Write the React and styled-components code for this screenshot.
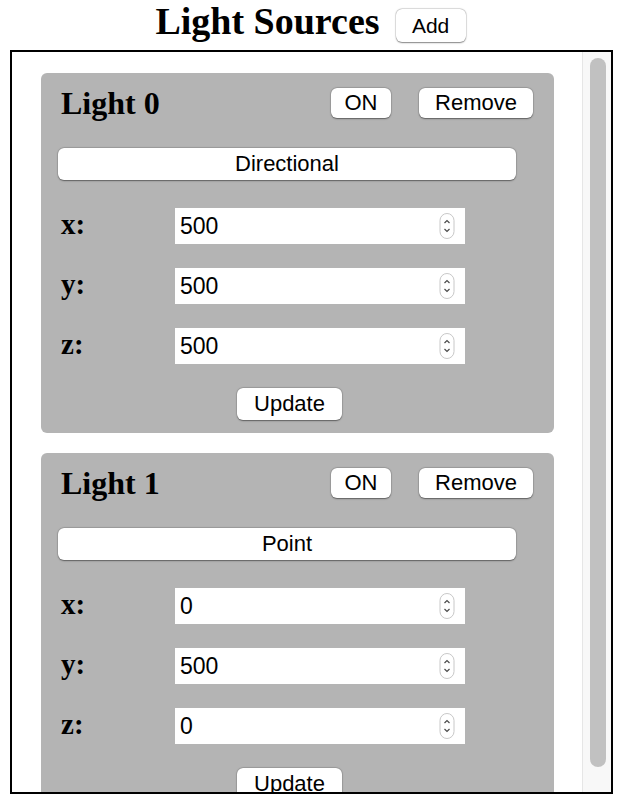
import React from "react";
import styled, { createGlobalStyle } from "styled-components";

const Global = createGlobalStyle`
  html, body { margin: 0; padding: 0; background: #ffffff; }
  body { font-family: "Liberation Serif", "Times New Roman", serif; color: #000; }
  input::-webkit-outer-spin-button, input::-webkit-inner-spin-button { -webkit-appearance: none; margin: 0; }
  input[type=number] { -moz-appearance: textfield; }
`;

const Header = styled.header`
  height: 50px;
  display: flex;
  justify-content: center;
  align-items: flex-start;
  gap: 16px;
  padding-right: 7px;
  box-sizing: border-box;
`;

const Title = styled.h1`
  margin: 2px 0 0;
  font-family: "Liberation Serif", "Times New Roman", serif;
  font-weight: 700;
  font-size: 38px;
  line-height: 38px;
`;

const Button = styled.button`
  appearance: none;
  box-sizing: border-box;
  background: #ffffff;
  border: 0;
  border-radius: 6px;
  box-shadow: 0 0.5px 1.5px rgba(0, 0, 0, 0.45), 0 0 0 0.5px rgba(0, 0, 0, 0.12);
  font-family: "Liberation Sans", Arial, sans-serif;
  font-size: ${(p) => p.$fs || 22}px;
  color: #000;
  padding: 0;
  width: ${(p) => p.$w}px;
  height: ${(p) => p.$h || 30}px;
  margin: ${(p) => p.$m || "0"};
  display: flex;
  align-items: center;
  justify-content: center;
  flex-shrink: 0;
`;

const Frame = styled.div`
  margin-left: 10px;
  width: 603px;
  height: 744px;
  box-sizing: border-box;
  border: 2px solid #000;
  display: flex;
`;

const Viewport = styled.div`
  width: 570px;
  height: 740px;
  overflow: hidden;
  box-sizing: border-box;
  padding: 21px 28px 0 29px;
  display: flex;
  flex-direction: column;
  gap: 20px;
`;

const ScrollTrack = styled.div`
  width: 29px;
  box-sizing: border-box;
  background: #f8f8f8;
  border-left: 1px solid #e6e6e6;
  padding: 6px 5px 0 7px;
`;

const ScrollThumb = styled.div`
  height: 709px;
  border-radius: 8px;
  background: #c1c1c1;
`;

const Card = styled.section`
  flex-shrink: 0;
  height: 360px;
  background: #b4b4b4;
  border-radius: 6px;
  box-sizing: border-box;
  padding: 15px 21px 0 20px;
  display: flex;
  flex-direction: column;
`;

const CardHead = styled.div`
  display: flex;
  align-items: flex-start;
  height: 30px;
`;

const CardTitle = styled.h2`
  flex: 1;
  margin: 0;
  font-family: "Liberation Serif", "Times New Roman", serif;
  font-weight: 700;
  font-size: 32px;
  line-height: 30px;
  white-space: nowrap;
`;

const Row = styled.div`
  display: flex;
  align-items: flex-start;
  height: 36px;
  margin-top: ${(p) => p.$mt}px;
`;

const Label = styled.label`
  width: 114px;
  font-family: "Liberation Serif", "Times New Roman", serif;
  font-weight: 700;
  font-size: 29px;
  line-height: 36px;
  margin-top: -2px;
`;

const InputBox = styled.div`
  width: 290px;
  height: 36px;
  background: #ffffff;
  display: flex;
  align-items: center;
  box-sizing: border-box;
  padding: 0 10px 0 5px;
`;

const NumInput = styled.input`
  flex: 1;
  min-width: 0;
  border: 0;
  outline: none;
  background: transparent;
  padding: 0;
  font-family: "Liberation Sans", Arial, sans-serif;
  font-size: 23px;
  color: #000;
`;

const Spinner = () => (
  <svg width="16" height="26" viewBox="0 0 16 26">
    <rect x="1" y="0.5" width="14" height="25" rx="7" fill="#fff" stroke="#c8c8c8" />
    <path d="M5.5 10 L8 7.5 L10.5 10" fill="none" stroke="#4a4a4a" strokeWidth="1.2" />
    <path d="M5.5 16 L8 18.5 L10.5 16" fill="none" stroke="#4a4a4a" strokeWidth="1.2" />
  </svg>
);

const Light = ({ index, kind, x, y, z }) => (
  <Card>
    <CardHead>
      <CardTitle>Light {index}</CardTitle>
      <Button $w={60} $m="0 28px 0 0">ON</Button>
      <Button $w={114}>Remove</Button>
    </CardHead>
    <Button $w={458} $h={32} $m="30px 0 0 -3px">{kind}</Button>
    {[["x", x], ["y", y], ["z", z]].map(([k, v], i) => (
      <Row key={k} $mt={i === 0 ? 28 : 24}>
        <Label>{k}:</Label>
        <InputBox>
          <NumInput type="number" defaultValue={v} />
          <Spinner />
        </InputBox>
      </Row>
    ))}
    <Button $w={105} $h={32} $m="24px 0 0 176px">Update</Button>
  </Card>
);

export default function App() {
  return (
    <>
      <Global />
      <Header>
        <Title>Light Sources</Title>
        <Button $w={70} $h={33} $fs={21} $m="9px 0 0 0">Add</Button>
      </Header>
      <Frame>
        <Viewport>
          <Light index={0} kind="Directional" x={500} y={500} z={500} />
          <Light index={1} kind="Point" x={0} y={500} z={0} />
        </Viewport>
        <ScrollTrack>
          <ScrollThumb />
        </ScrollTrack>
      </Frame>
    </>
  );
}
